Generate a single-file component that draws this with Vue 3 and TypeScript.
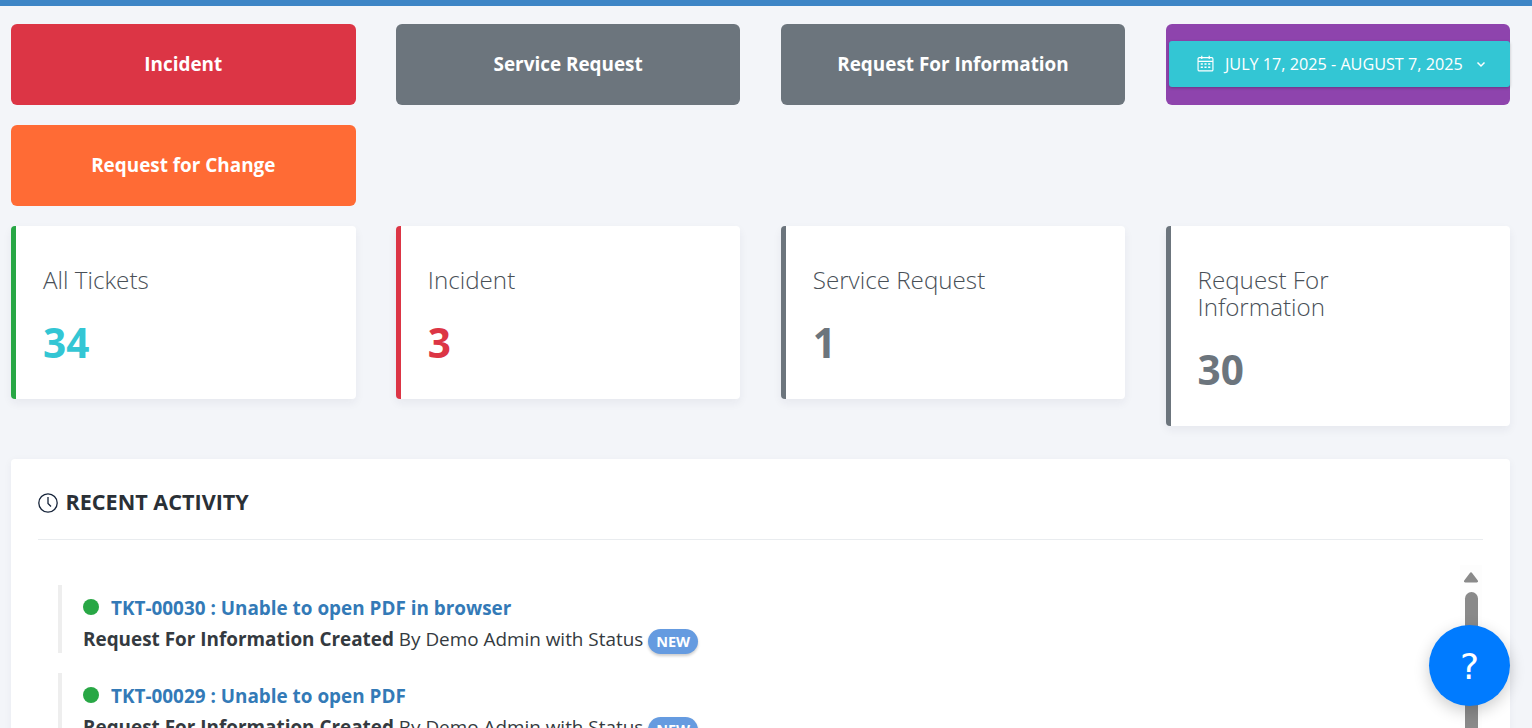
<script setup lang="ts">
interface Tile { label: string; color: string }
interface Stat { label: string; value: number; accent: string; valueColor: string }
interface Activity { id: string; title: string }

const tiles: Tile[] = [
  { label: 'Incident', color: '#dc3545' },
  { label: 'Service Request', color: '#6c757d' },
  { label: 'Request For Information', color: '#6c757d' },
]
const stats: Stat[] = [
  { label: 'All Tickets', value: 34, accent: '#28a745', valueColor: '#33c6d4' },
  { label: 'Incident', value: 3, accent: '#dc3545', valueColor: '#dc3545' },
  { label: 'Service Request', value: 1, accent: '#6c757d', valueColor: '#6c757d' },
  { label: 'Request For Information', value: 30, accent: '#6c757d', valueColor: '#6c757d' },
]
const activities: Activity[] = [
  { id: 'TKT-00030', title: 'Unable to open PDF in browser' },
  { id: 'TKT-00029', title: 'Unable to open PDF' },
]
</script>

<template>
  <div class="page">
    <div class="topbar"></div>
    <main class="content">
      <section class="grid tiles">
        <a v-for="t in tiles" :key="t.label" class="tile" :style="{ background: t.color }">{{ t.label }}</a>
        <div class="tile date-tile">
          <button class="date-btn">
            <svg class="cal" viewBox="0 0 16 16" width="17" height="17" fill="none" stroke="currentColor" stroke-width="1.1">
              <rect x="1" y="2.5" width="14" height="12.5" rx="1.2" />
              <path d="M1 6h14M4.5 .8v3M11.500 .8v3" />
              <path d="M3.500 8.500h2M7 8.500h2M10.500 8.500h2M3.500 11.500h2M7 11.500h2M10.500 11.500h2" stroke-width="1.400" />
            </svg>
            <span>JULY 17, 2025 - AUGUST 7, 2025</span>
            <svg class="chev" viewBox="0 0 12 12" width="12" height="12" fill="none" stroke="currentColor" stroke-width="1.500">
              <path d="M2.500 4.500 6 8l3.500-3.500" />
            </svg>
          </button>
        </div>
        <a class="tile" style="background: #ff6b35">Request for Change</a>
      </section>

      <section class="grid stats">
        <article v-for="s in stats" :key="s.label" class="stat" :style="{ borderLeftColor: s.accent }">
          <h3 class="stat-label">{{ s.label }}</h3>
          <div class="stat-value" :style="{ color: s.valueColor }">{{ s.value }}</div>
        </article>
      </section>

      <section class="panel">
        <h2 class="panel-title">
          <svg viewBox="0 0 20 20" width="20" height="20" fill="none" stroke="#16243a" stroke-width="1.300">
            <circle cx="10" cy="10" r="9.200" />
            <path d="M10 4v6.500l3 3" />
          </svg>
          RECENT ACTIVITY
        </h2>
        <ul class="feed">
          <li v-for="a in activities" :key="a.id" class="feed-item">
            <div class="feed-head">
              <span class="dot"></span>
              <a class="feed-link">{{ a.id }} : {{ a.title }}</a>
            </div>
            <div class="feed-body">
              <strong>Request For Information Created</strong> By Demo Admin with Status
              <span class="badge">NEW</span>
            </div>
          </li>
        </ul>
        <div class="scroll">
          <svg class="scroll-up" viewBox="0 0 16 11" width="16" height="11">
            <path d="M6.700 1.200a1.600 1.600 0 0 1 2.600 0l5.500 7.300c.6.900.1 2-1 2H2.200c-1.100 0-1.600-1.100-1-2z" fill="#8a8a8a" />
          </svg>
          <span class="scroll-thumb"></span>
        </div>
      </section>
    </main>
    <button class="help">?</button>
  </div>
</template>

<style>
html, body { margin: 0; height: 100%; overflow: hidden; background: #f3f5f9; }
</style>

<style scoped>
.page {
  height: 728px;
  overflow: hidden;
  position: relative;
  background: #f3f5f9;
  font-family: "Open Sans", "Liberation Sans", sans-serif;
  color: #343a40;
}
.topbar { height: 6px; background: #3d85c6; }
.content { padding: 18px 21.900px 0 11px; }
.grid {
  display: grid;
  grid-template-columns: repeat(4, 1fr);
  column-gap: 40.300px;
  row-gap: 20px;
  align-items: start;
}
.tile {
  height: 81px;
  box-sizing: border-box;
  border-radius: 6px;
  display: flex;
  align-items: center;
  justify-content: center;
  padding-bottom: 2px;
  color: #fff;
  font-size: 18.900px;
  font-weight: 700;
}
.date-tile {
  background: #8e44ad;
  padding: 0 0 0 3px;
  justify-content: stretch;
}
.date-btn {
  flex: 1;
  height: 46px;
  margin-top: -1px;
  border: 0;
  border-radius: 3px;
  background: #33c6d4;
  color: #fff;
  font: 500 16.200px "Open Sans", sans-serif;
  display: flex;
  align-items: center;
  justify-content: center;
  gap: 11px;
  padding: 0 0 1px 5px;
  box-shadow: 0 1px 3px rgba(0, 0, 0, .25);
  white-space: nowrap;
}
.chev { margin-left: 1px; }
.cal { flex: none; }
.stats { margin-top: 20px; }
.stat {
  background: #fff;
  border-left: 5px solid;
  border-radius: 4px;
  padding: 40.300px 60px 26px 27px;
  box-shadow: 0 4px 10px rgba(30, 40, 70, .06);
}
.stat-label {
  margin: 0;
  font-size: 24.200px;
  line-height: 27px;
  font-weight: 300;
  color: #495057;
}
.stat-value {
  margin-top: 19.700px;
  font-size: 40.500px;
  line-height: 60px;
  font-weight: 700;
}
.panel {
  position: relative;
  margin-top: 33px;
  height: 300px;
  background: #fff;
  border-radius: 4px;
  padding: 0 27px;
  box-shadow: 0 2px 8px rgba(30, 40, 70, .05);
}
.panel-title {
  margin: 0;
  height: 81px;
  box-sizing: border-box;
  padding-top: 27px;
  border-bottom: 1px solid #e9ecef;
  display: flex;
  align-items: flex-start;
  gap: 7.500px;
  font-size: 21.600px;
  line-height: 32px;
  font-weight: 700;
  color: #2a3036;
}
.panel-title svg { margin-top: 7px; flex: none; }
.feed { list-style: none; margin: 45px 0 0 20px; padding: 0; display: flex; flex-direction: column; gap: 20px; }
.feed-item {
  border-left: 4px solid #eeeeee;
  padding: 10px 0 0 21px;
  height: 68px;
  box-sizing: border-box;
}
.feed-head { display: flex; align-items: center; gap: 12px; height: 27px; }
.dot { width: 16px; height: 16px; border-radius: 50%; background: #28a745; flex: none; margin-top: -2px; }
.feed-link { font-size: 18.900px; font-weight: 700; color: #337ab7; margin-top: -1px; }
.feed-body { font-size: 18.900px; line-height: 27px; margin-top: 4px; white-space: nowrap; }
.feed-body strong { font-weight: 700; }
.badge {
  display: inline-block;
  background: #659be0;
  color: #fff;
  font-size: 14.500px;
  font-weight: 700;
  line-height: 25px;
  padding: 0 8px;
  border-radius: 13px;
  vertical-align: -1px;
  box-shadow: 0 2px 3px rgba(0, 0, 0, .2);
}
.scroll {
  position: absolute;
  right: 31px;
  top: 106px;
  width: 22px;
  margin-right: -3px;
  height: 194px;
  padding-top: 7px;
  box-sizing: border-box;
  background: #fdfdfd;
  display: flex;
  flex-direction: column;
  align-items: center;
}
.scroll-up { flex: none; }
.scroll-thumb { width: 13px; height: 200px; margin-top: 9px; border-radius: 7px; background: #8a8a8a; flex: none; }
.help {
  position: absolute;
  left: 1429px;
  top: 625px;
  width: 81px;
  height: 81px;
  border-radius: 50%;
  border: 0;
  padding: 2px 0 0;
  background: #007bff;
  color: #fff;
  font: 400 36px "DejaVu Sans", sans-serif;
  box-shadow: 0 5px 16px rgba(0, 0, 0, .2);
}
</style>
